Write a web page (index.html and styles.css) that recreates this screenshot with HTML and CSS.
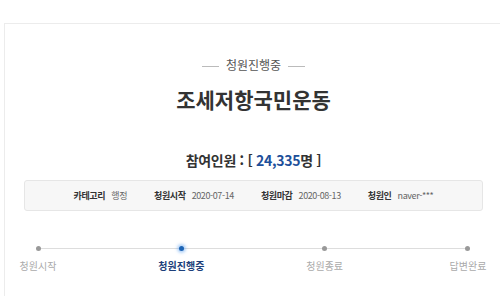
FILE: index.html
```html
<!DOCTYPE html>
<html lang="ko">
<head>
  <meta charset="UTF-8">
  <title>청원진행중</title>
  <link rel="stylesheet" href="styles.css">
</head>
<body>

  <div class="petition">
    <p class="status"><span>청원진행중</span></p>
    <h2 class="title">조세저항국민운동</h2>
    <p class="count">참여인원 : [ <span class="num">24,335</span>명 ]</p>

    <ul class="info">
      <li><strong>카테고리</strong> 행정</li>
      <li><strong>청원시작</strong> 2020-07-14</li>
      <li><strong>청원마감</strong> 2020-08-13</li>
      <li><strong>청원인</strong> naver-***</li>
    </ul>

    <!-- 진행 단계 -->
    <div class="steps">
      <div class="step"><i></i><span>청원시작</span></div>
      <div class="step on"><i></i><span>청원진행중</span></div>
      <div class="step"><i></i><span>청원종료</span></div>
      <div class="step"><i></i><span>답변완료</span></div>
    </div>
  </div>

</body>
</html>
```

FILE: styles.css
```css
html {
  overflow: hidden;
}

body {
  margin: 0;
  font-family: "Noto Sans CJK KR", "Noto Sans", sans-serif;
  color: #333;
  background: #fff;
}

.petition {
  box-sizing: border-box;
  width: 499px;
  height: 273px;
  margin: 23px 0 0 4px;
  border: 1px solid #ececec;
  border-bottom: none;
  padding-top: 33px;
}

.status {
  margin: 0;
  text-align: center;
  font-size: 12px;
  line-height: 16px;
  color: #555;
}

.status span::before,
.status span::after {
  content: "";
  display: inline-block;
  width: 17px;
  height: 1px;
  background: #bbb;
  vertical-align: middle;
  margin: 0 7px;
}

.title {
  margin: 12px 0 0;
  text-align: center;
  font-size: 21px;
  line-height: 28px;
  font-weight: bold;
  color: #333;
}

.count {
  margin: 37px 0 0;
  text-align: center;
  font-size: 14px;
  line-height: 20px;
  font-weight: bold;
  letter-spacing: -0.3px;
  color: #333;
}

.count .num {
  color: #1d4f9a;
}

.info {
  list-style: none;
  margin: 10px 19px 0;
  padding: 0;
  height: 29px;
  display: flex;
  justify-content: center;
  align-items: center;
  gap: 27px;
  background: #f7f7f7;
  border: 1px solid #e6e6e6;
  border-radius: 3px;
  font-size: 9px;
  letter-spacing: -0.4px;
  color: #666;
}

.info strong {
  color: #333;
  margin-right: 4px;
}

.steps {
  display: flex;
  justify-content: space-between;
  margin: 35px 34px 0 33px;
  background: linear-gradient(#ddd, #ddd) no-repeat 0 2px / 100% 1px;
}

.step {
  width: 0;
  display: flex;
  flex-direction: column;
  align-items: center;
}

.step i {
  display: block;
  width: 5px;
  height: 5px;
  border-radius: 50%;
  background: #999;
}

.step span {
  white-space: nowrap;
  margin-top: 8px;
  font-size: 10px;
  line-height: 14px;
  color: #aaa;
}

.step.on i {
  background: #1c64b5;
  box-shadow: 0 0 3px 2px rgba(90, 160, 240, 0.45);
}

.step.on span {
  color: #1d3f7a;
  font-weight: bold;
}
```
